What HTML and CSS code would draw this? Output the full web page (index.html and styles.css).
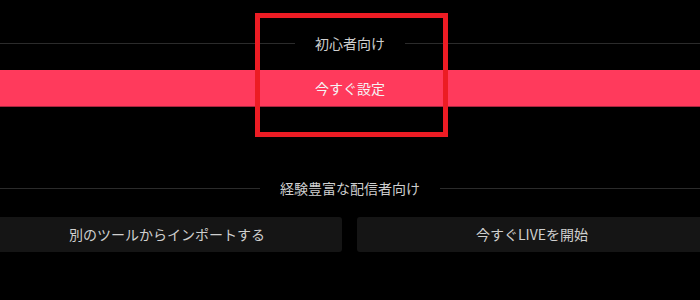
FILE: index.html
```html
<!DOCTYPE html>
<html lang="ja">
<head>
<meta charset="utf-8">
<title>配信設定</title>
<link rel="stylesheet" href="styles.css">
</head>
<body>
<div class="page">
  <div class="divider divider-first"><span class="divider-label">初心者向け</span></div>
  <div class="primary-bar">今すぐ設定</div>
  <div class="divider divider-second"><span class="divider-label">経験豊富な配信者向け</span></div>
  <div class="actions">
    <div class="action-btn">別のツールからインポートする</div>
    <div class="action-btn">今すぐLIVEを開始</div>
  </div>
  <div class="highlight-box"></div>
</div>
</body>
</html>
```

FILE: styles.css
```css
html, body {
  margin: 0;
  padding: 0;
  background: #000;
}
body {
  width: 700px;
  height: 300px;
  overflow: hidden;
  font-family: "Noto Sans CJK JP", "Noto Sans", sans-serif;
  font-size: 14px;
  color: #cfcfcf;
}
.page {
  position: relative;
  padding-top: 33px;
}
.divider {
  display: flex;
  align-items: center;
  height: 21px;
}
.divider::before,
.divider::after {
  content: "";
  flex: 1;
  height: 1px;
  background: #2b2b2b;
}
.divider-label {
  padding: 0 20px;
  line-height: 21px;
  white-space: nowrap;
}
.primary-bar {
  margin-top: 16px;
  height: 37px;
  line-height: 37px;
  background: #ff3a5c;
  color: #f4f4f4;
  text-align: center;
  box-shadow: inset 0 -1px 0 #a8263e;
}
.divider-second {
  margin-top: 71px;
}
.actions {
  display: flex;
  gap: 15px;
  margin: 18px -7px 0 -8px;
}
.action-btn {
  flex: 1;
  height: 35px;
  line-height: 35px;
  background: #151515;
  border-radius: 3px;
  text-align: center;
  color: #cfcfcf;
}
.highlight-box {
  position: absolute;
  left: 255px;
  top: 13px;
  width: 193px;
  height: 124px;
  box-sizing: border-box;
  border: 5px solid #ec1c24;
}
```
